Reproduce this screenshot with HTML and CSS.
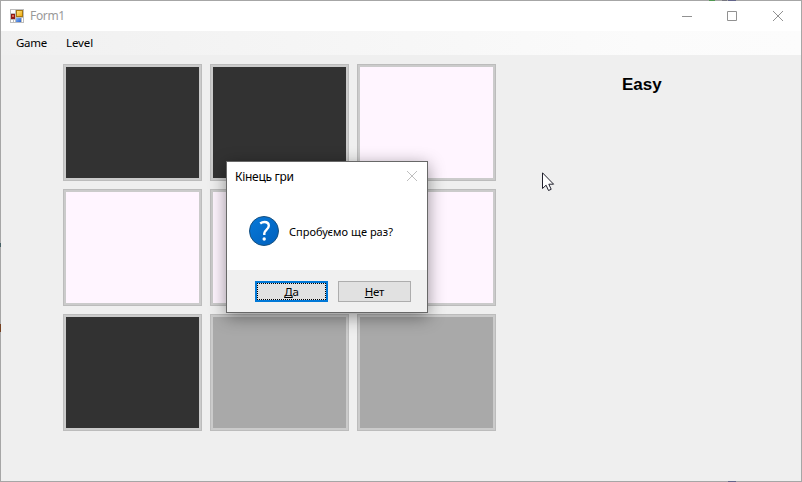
FILE: index.html
```html
<!DOCTYPE html>
<html lang="uk">
<head>
<meta charset="utf-8">
<title>Form1</title>
<link rel="stylesheet" href="styles.css">
</head>
<body>
<div class="window">
  <header class="titlebar">
    <svg class="app-icon" width="14" height="14" viewBox="0 0 14 14" shape-rendering="crispEdges">
      <defs>
        <linearGradient id="gold" x1="0" y1="0" x2="1" y2="1"><stop offset="0" stop-color="#ffe680"/><stop offset="1" stop-color="#f0aa10"/></linearGradient>
        <linearGradient id="azure" x1="0" y1="0" x2="1" y2="1"><stop offset="0" stop-color="#8ab8f5"/><stop offset="1" stop-color="#2862d0"/></linearGradient>
      </defs>
      <path fill="#bdbdbd" d="M0 0h14v14H0z"/>
      <path fill="#fff" d="M1 1h4v3H1zM1 11h2v2H1zM4 11h1v2H4zM12 9h1v4h-1z"/>
      <path fill="#8f1a16" d="M1 5h4v5H1z"/><path fill="#e06a55" d="M2 6h2v2H2z"/>
      <path fill="#a87810" d="M6 1h7v7H6z"/><path fill="url(#gold)" d="M7 2h5v5H7z"/>
      <path fill="url(#azure)" d="M6 9h5v4H6z"/>
    </svg>
    <span class="title">Form1</span>
    <svg class="controls" width="102" height="10" viewBox="0 0 102 10" fill="none" stroke="#919191">
      <path d="M0 5.5h10M45.5.5h9v9h-9z"/>
      <path d="M91 0l10 10M101 0L91 10"/>
    </svg>
  </header>
  <nav class="menu"><span class="game">Game</span><span class="level">Level</span></nav>
  <main class="content">
    <div class="board">
      <i class="tile dark"></i><i class="tile dark"></i><i class="tile pink"></i>
      <i class="tile pink"></i><i class="tile pink"></i><i class="tile pink"></i>
      <i class="tile dark"></i><i class="tile gray"></i><i class="tile gray"></i>
    </div>
    <div class="difficulty">Easy</div>
  </main>
</div>
<i class="edge green"></i><i class="edge dim"></i><i class="edge blue"></i><i class="edge blue bottom"></i>
<i class="edge teal"></i><i class="edge brown"></i>
<section class="dialog">
  <div class="dialog-title"><span>Кінець гри</span>
    <svg width="10" height="10" viewBox="0 0 10 10" stroke="#bfbfbf"><path d="M0 0l10 10M10 0L0 10"/></svg>
  </div>
  <div class="dialog-body">
    <svg width="30" height="30" viewBox="0 0 30 30">
      <defs><linearGradient id="badge" x1="0" y1="0" x2="1" y2="1"><stop offset="0" stop-color="#0879d8"/><stop offset="1" stop-color="#0060bd"/></linearGradient></defs>
      <circle cx="15" cy="15" r="14.5" fill="url(#badge)" stroke="#17507f"/>
      <path d="M11.2 7.5c1.4-1.1 2.7-1.5 4.2-1.5 2.7 0 4.4 1.4 4.4 3.7 0 3.9-4.5 4.2-4.5 7.6v1.7" fill="none" stroke="#fff" stroke-width="2.4"/>
      <circle cx="15.2" cy="23" r="1.7" fill="#fff"/>
    </svg>
    <span>Спробуємо ще раз?</span>
  </div>
  <div class="dialog-footer">
    <button class="yes"><span><u>Д</u>а</span></button>
    <button class="no"><span><u>Н</u>ет</span></button>
  </div>
</section>
<svg class="cursor" width="13" height="20" viewBox="0 0 13 20">
  <path d="M.5.8v15.7l3.6-3.3 2.4 5.3 2.7-1.2-2.4-5.1h4.8z" fill="#fff" stroke="#20202c"/>
</svg>
</body>
</html>
```
FILE: styles.css
```css
* { box-sizing: border-box; }
body {
  margin: 0;
  width: 802px;
  height: 482px;
  overflow: hidden;
  position: relative;
  font: 12px/16px "Noto Sans", "Open Sans", sans-serif;
  color: #000;
}
.window {
  width: 802px;
  height: 482px;
  border: 1px solid #a6a6a6;
  background: #efefef;
}
.titlebar {
  height: 30px;
  background: #fff;
  display: flex;
  align-items: center;
  padding: 0 17px 0 9px;
}
.title { margin-left: 6px; color: #999; letter-spacing: -0.35px; }
.controls { margin-left: auto; }
.menu {
  height: 24px;
  background: linear-gradient(90deg, #f0f0f0, #fbfbfb 80%, #fcfcfc);
  display: flex;
  align-items: center;
  padding-left: 15px;
  font-size: 11.5px;
}
.game { width: 50px; letter-spacing: -0.3px; }
.level { letter-spacing: -0.1px; }
.content { display: flex; padding: 9px 0 0 62px; }
.board {
  display: grid;
  grid-template-columns: repeat(3, 139px);
  grid-auto-rows: 117px;
  gap: 8px;
}
.tile { border: 1px solid #bcbcbc; box-shadow: inset 0 0 0 2px #cbcbcb; }
.dark { background: #323232; }
.pink { background: #fff5ff; }
.gray { background: #a9a9a9; }
.difficulty {
  margin: 10px 0 0 126px;
  font: bold 17px/22px "Liberation Sans", Arial, sans-serif;
}
.edge { position: absolute; height: 1px; top: 0; }
.green { left: 709px; width: 6px; background: #4f9850; }
.dim { left: 722px; width: 5px; background: #77777f; }
.blue { left: 728px; width: 8px; background: #62658a; }
.bottom { top: 481px; }
.teal { left: 0; top: 243px; width: 1px; height: 4px; background: #456065; }
.brown { left: 0; top: 324px; width: 1px; height: 8px; background: #75401f; }
.dialog {
  position: absolute;
  left: 226px;
  top: 161px;
  width: 202px;
  height: 152px;
  display: flex;
  flex-direction: column;
  border: 1px solid #686868;
  background: #fff;
  box-shadow: 0 4px 16px rgba(0, 0, 0, 0.42);
}
.dialog-title {
  height: 29px;
  display: flex;
  align-items: center;
  justify-content: space-between;
  padding: 0 10px 0 8px;
}
.dialog-title svg { margin-top: -1px; }
.dialog-title span { letter-spacing: -0.3px; padding-top: 1px; }
.dialog-body {
  height: 79px;
  display: flex;
  align-items: center;
  gap: 10px;
  padding-left: 22px;
  font-size: 11px;
}
.dialog-body span { padding-top: 2px; letter-spacing: 0.03px; }
.dialog-footer {
  flex: 1;
  background: #f0f0f0;
  display: flex;
  gap: 10px;
  padding: 11px 0 0 28px;
}
button {
  width: 73px;
  height: 21px;
  padding: 0;
  border: 1px solid #adadad;
  background: #e1e1e1;
  color: #000;
  font: 11.5px/17px "Noto Sans", sans-serif;
  letter-spacing: -0.2px;
}
.yes { border: 2px solid #0078d7; outline: 1px dotted #000; outline-offset: -3px; }
u { text-underline-offset: 1px; text-decoration-skip-ink: none; }
.cursor { position: absolute; left: 542px; top: 172px; }
```
